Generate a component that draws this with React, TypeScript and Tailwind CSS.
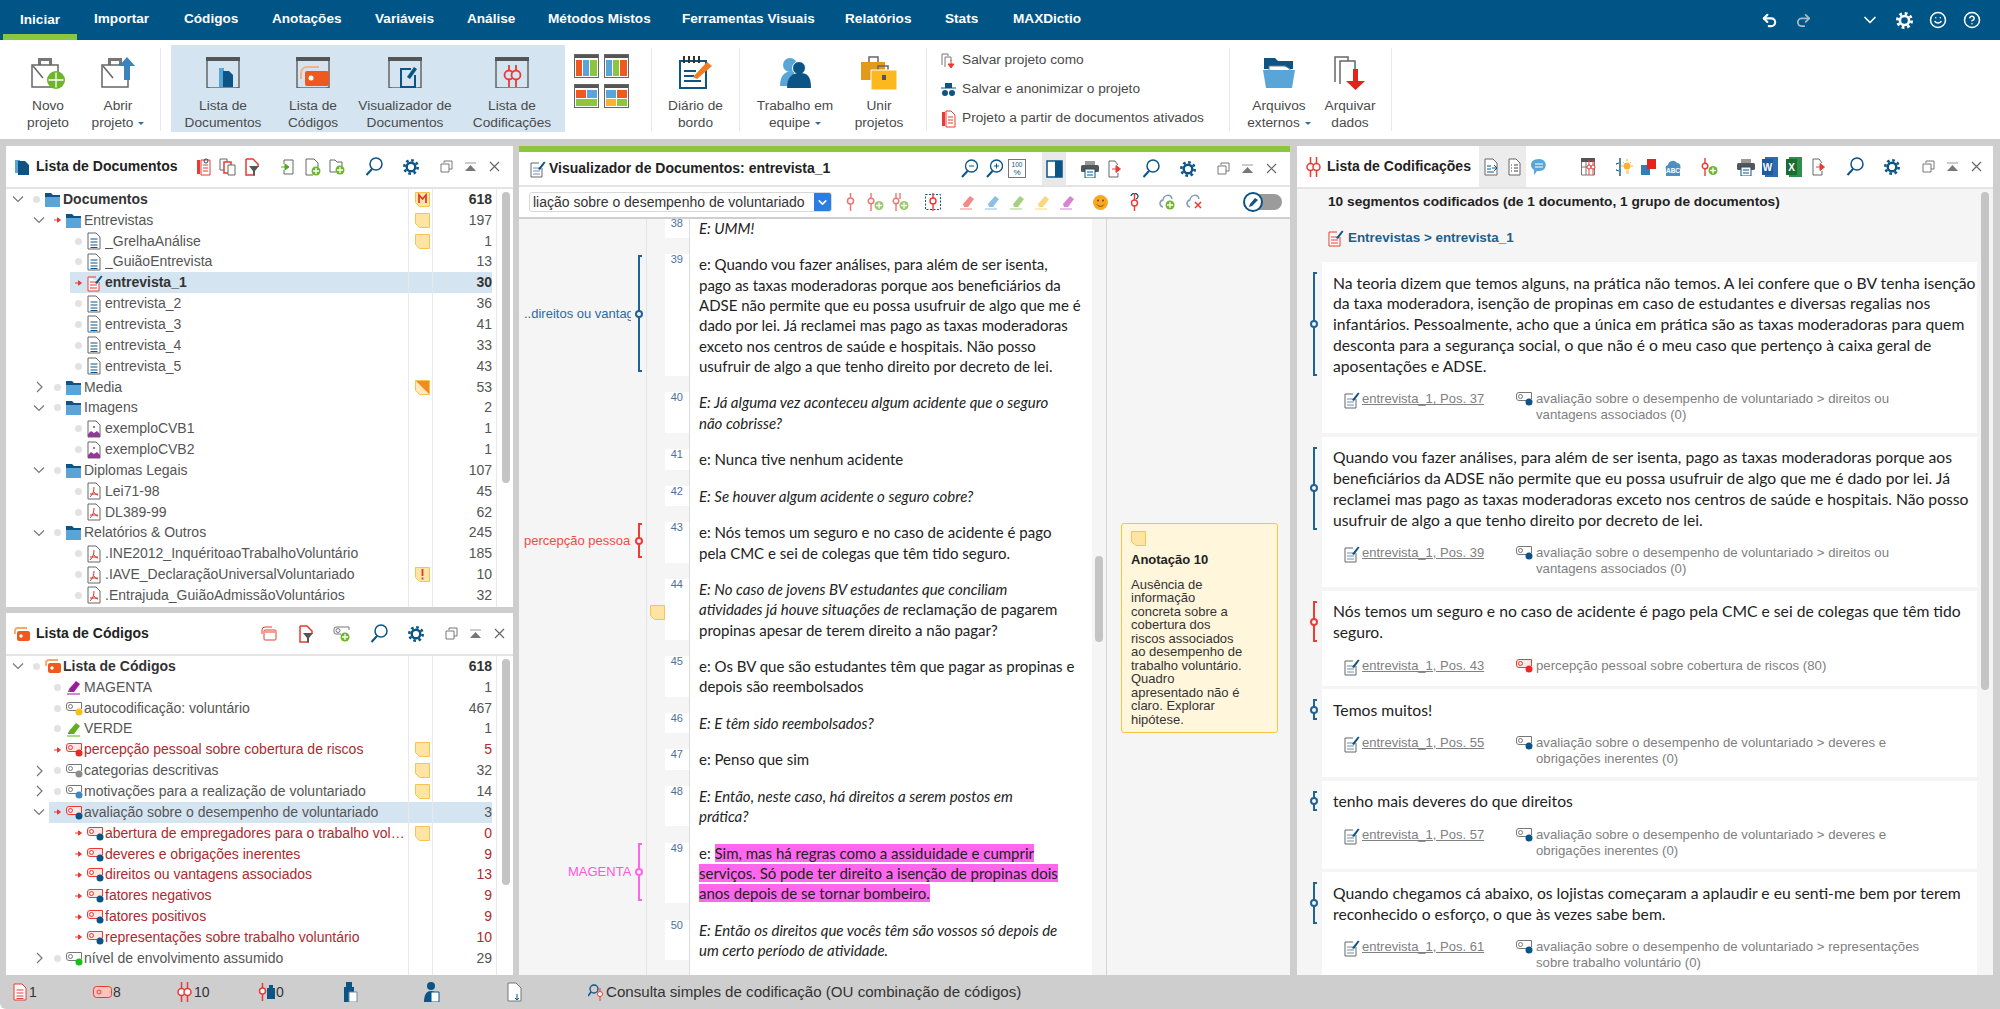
import type { ReactNode } from "react";
import { ChevronDown, CircleHelp, Redo2, Smile, Undo2 } from "lucide-react";

const BLUE = "#0b5485";
const SKY = "#5aa5d8";
const RED = "#ea3a33";

const S = ({ w, h, vb, children }: { w: number; h: number; vb?: string; children: ReactNode }) => (
  <svg width={w} height={h} viewBox={vb ?? `0 0 ${w} ${h}`} fill="none" className="shrink-0">
    {children}
  </svg>
);

const At = ({ c, children }: { c: string; children: ReactNode }) => (
  <span className={`flex shrink-0 items-center ${c}`}>{children}</span>
);

// small toolbar icons
const Search = () => (
  <S w={18} h={19}>
    <circle cx="11" cy="7" r="6" stroke={BLUE} strokeWidth="1.5" />
    <path d="M7 12 1.5 18" stroke={BLUE} strokeWidth="2" />
  </S>
);
const Gear = ({ c = BLUE, size = 16 }: { c?: string; size?: number }) => (
  <S w={size} h={size} vb="0 0 16 16">
    <circle cx="8" cy="8" r="4.300" stroke={c} strokeWidth="2.400" />
    <circle cx="8" cy="8" r="6.700" stroke={c} strokeWidth="2.600" strokeDasharray="2.630 2.630" />
  </S>
);
const Restore = () => (
  <S w={13} h={13}>
    <path d="M4 3V1h8v8h-3M1 4h8v8H1z" stroke="#777" />
  </S>
);
const Eject = () => (
  <S w={11} h={10}>
    <path d="M0 1h11" stroke="#999" />
    <path d="M5.5 3 11 9H0z" fill="#777" />
  </S>
);
const Close = () => (
  <S w={11} h={11}>
    <path d="M1 1l9 9M10 1l-9 9" stroke="#666" strokeWidth="1.2" />
  </S>
);
const WinControls = ({ c }: { c: string }) => (
  <>
    <At c={c}><Restore /></At>
    <At c="ml-[12px]"><Eject /></At>
    <At c="ml-[13px]"><Close /></At>
  </>
);
const Plus = ({ x, y, r = 4.5 }: { x: number; y: number; r?: number }) => (
  <>
    <circle cx={x} cy={y} r={r} fill="#6db52c" />
    <path d={`M${x - r + 1.5} ${y}h${2 * r - 3}M${x} ${y - r + 1.5}v${2 * r - 3}`} stroke="#fff" strokeWidth="1.3" />
  </>
);
const Doc = ({ line = BLUE, edge = "#666" }: { line?: string; edge?: string }) => (
  <S w={14} h={18}>
    <path d="M1 1h8l4 4v12H1z" fill="#fff" stroke={edge} />
    <path d="M3.5 7h7M3.5 10h7M3.5 13h7M3.5 15.5h7" stroke={line} />
  </S>
);
const DocPen = ({ red = false }: { red?: boolean }) => (
  <S w={16} h={18}>
    <path d="M1 3h8M1 3v14h11V8" stroke={red ? RED : "#666"} fill="#fff" />
    <path d="M3 8h7M3 11h7M3 14h7" stroke={red ? RED : "#6c8fb0"} />
    <path d="M8 9 14 1.5l1.5 1L10 10z" fill={BLUE} />
  </S>
);
const Pdf = () => (
  <S w={14} h={18}>
    <path d="M1 1h8l4 4v12H1z" fill="#fff" stroke="#666" />
    <path d="M7 5c0 4-1 7-4 10M7 10c1 2 2.500 3 4 3M3 12h8" stroke="#d8302a" />
  </S>
);
const Img = () => (
  <S w={14} h={18}>
    <path d="M1 1h8l4 4v12H1z" fill="#fff" stroke="#666" />
    <path d="M1 17v-3l3-3 3 2 3-2 3 3v3z" fill="#8e3a96" />
    <circle cx="7" cy="7" r="1" fill="#8e3a96" />
  </S>
);
const Folder = () => (
  <S w={15} h={15}>
    <path d="M0 2h6l2 2h7v11H0z" fill={SKY} />
    <path d="M0 1h6l2 2h7v2H0z" fill={BLUE} />
  </S>
);
const Memo = ({ k }: { k?: "M" | "!" | "media" }) => (
  <S w={15} h={15}>
    <path d="M.5.500h14v14h-10l-4-4z" fill={k === "media" ? "#ffe9bd" : "#ffe4a3"} stroke="#f8c354" />
    {k === "media" && <path d="M1 1h13v13z" fill="#f58a1f" />}
    {k === "M" && <path d="M4 11V3l3.500 4L11 3v8" stroke="#e0352b" strokeWidth="1.7" />}
    {k === "!" && <path d="M7.500 2v7M7.500 10.500v2" stroke="#e0352b" strokeWidth="1.8" />}
  </S>
);
const Tag = ({ dot, red = false }: { dot: string; red?: boolean }) => (
  <S w={17} h={15}>
    <path d="M15.500 8V1.500H3A2.500 2.500 0 0 0 .5 4v3A2.500 2.500 0 0 0 3 9.500h7" stroke={red ? RED : "#777"} fill={red ? "#fde8e6" : "#fff"} />
    <circle cx="4.500" cy="5.500" r="2" stroke={red ? RED : "#777"} />
    <circle cx="13" cy="11" r="3.500" fill={dot} />
  </S>
);
const CodesIcon = () => (
  <S w={16} h={14}>
    <path d="M1 7V4a3 3 0 0 1 3-3h9" stroke="#f8a66c" strokeWidth="1.800" />
    <rect x="3" y="4" width="13" height="10" rx="2" fill="#f0591e" />
    <circle cx="7" cy="9" r="1.700" fill="#fff" />
  </S>
);
const Pen = ({ c }: { c: string }) => (
  <S w={16} h={16}>
    <path d="M3 10 10 2l4 3-6 8H4z" fill={c} />
    <path d="M3 10l-1 3h2" fill="#555" />
    <path d="M1 15h13" stroke={c} />
  </S>
);
const Seg = ({ c = RED }: { c?: string }) => (
  <S w={9} h={18}>
    <path d="M4.500 0v18" stroke={c} strokeWidth="1.500" />
    <circle cx="4.500" cy="8" r="3" fill="#fff" stroke={c} strokeWidth="1.500" />
  </S>
);
const Seg2 = ({ size = 1 }: { size?: number }) => (
  <S w={15 * size} h={20 * size} vb="0 0 15 20">
    <path d="M4.500 0v20M10.500 0v20" stroke={RED} strokeWidth="1.500" />
    <circle cx="4.500" cy="10" r="3.500" fill="#fff" stroke={RED} strokeWidth="1.500" />
    <circle cx="10.500" cy="10" r="3.500" fill="#fff" stroke={RED} strokeWidth="1.500" />
  </S>
);
const SegPlus = ({ two = false, faded = false }: { two?: boolean; faded?: boolean }) => (
  <S w={17} h={18}>
    <g opacity={faded ? 0.7 : 1}>
      <path d="M4 0v18" stroke={RED} strokeWidth="1.400" />
      <circle cx="4" cy="8" r="2.800" fill="#fff" stroke={RED} strokeWidth="1.400" />
      {two && <path d="M8 0v6" stroke={RED} strokeWidth="1.400" />}
      <Plus x={12} y={12.500} />
    </g>
  </S>
);
const Printer = () => (
  <S w={18} h={18}>
    <path d="M4 5V1h10v4z" fill="#999" />
    <rect x="0" y="5" width="18" height="7" rx="1.500" fill="#555" />
    <rect x="4" y="9" width="10" height="9" fill="#fff" stroke={BLUE} />
    <path d="M6 12h6M6 15h6" stroke={BLUE} />
  </S>
);
const Export = () => (
  <S w={14} h={18}>
    <path d="M10 5 7 1H1v16h9v-4" stroke="#666" />
    <path d="M4 9h6M8 5.500 12.500 9 8 12.500z" fill={RED} stroke={RED} />
  </S>
);
const HlPen = ({ c }: { c: string }) => (
  <S w={15} h={16}>
    <path d="M3 10 10 2l4 3-6 8H4z" fill={c} opacity="0.7" />
    <path d="M0 15h12" stroke={c} opacity="0.7" />
  </S>
);
const Cloud = ({ x = false }: { x?: boolean }) => (
  <S w={17} h={18}>
    <path d="M4 14c-4-1-4-6 0-7 1-6 8-6 9-1" stroke="#7d9db8" strokeWidth="1.500" />
    {x ? <path d="M9 9l6 6M15 9l-6 6" stroke={RED} strokeWidth="1.500" /> : <Plus x={11} y={12} />}
  </S>
);

// ribbon icons
const Case = ({ children }: { children: ReactNode }) => (
  <S w={36} h={34}>
    <path d="M8 9V2h14v7" fill="#777" />
    <path d="M11 9V5h8v4" fill="#fff" />
    <path d="M2 9h26v22H2z" fill="#fff" stroke="#666" strokeWidth="1.500" />
    <path d="M3 10l10 12" stroke="#666" strokeWidth="1.500" />
    {children}
  </S>
);
const Frame = ({ children }: { children: ReactNode }) => (
  <S w={34} h={31}>
    <path d="M1 31h3M30 31h3M1 2v29M33 2v29" stroke="#666" strokeWidth="1.500" />
    <path d="M1 31h32" stroke="#666" strokeWidth="1.500" />
    <path d="M0 0h34v4H0z" fill="#555" />
    {children}
  </S>
);
const Grid = ({ cells }: { cells: string[] }) => (
  <S w={25} h={24}>
    <path d="M0 0h25v4H0z" fill="#555" />
    <rect x=".5" y=".5" width="24" height="23" stroke="#666" />
    {cells.map((d, i) => (
      <path key={i} d={d.split("|")[0]} fill={d.split("|")[1]} />
    ))}
  </S>
);
const Caret = () => (
  <span className="ml-[5px] inline-block h-0 w-0 border-x-[3px] border-t-[3px] border-x-transparent border-t-[#2f6f9f] align-middle" />
);

const RibbonBtn = ({ w, icon, a, b, caret }: { w: string; icon: ReactNode; a: string; b: string; caret?: boolean }) => (
  <div className={`flex h-[99px] shrink-0 flex-col items-center ${w}`}>
    <div className="flex h-[33px] mt-[16px] items-center justify-center">{icon}</div>
    <div className="mt-[8px] whitespace-nowrap text-center text-[13.7px] leading-[17px] text-[#4a4a4a]">
      <div>{a}</div>
      <div>{b}{caret && <Caret />}</div>
    </div>
  </div>
);
const Sep = ({ c }: { c: string }) => <div className={`mt-[8px] h-[83px] w-px shrink-0 bg-[#e8e8e8] ${c}`} />;

const Ribbon = () => (
  <div className="flex h-[99px] shrink-0 bg-white pl-[13px]">
    <RibbonBtn w="w-[70px]" a="Novo" b="projeto" icon={<Case><Plus x={26} y={24} r={9} /></Case>} />
    <RibbonBtn w="w-[70px]" a="Abrir" b="projeto" caret icon={<Case><path d="M27 1l8 9h-5v14h-6V10h-5z" fill="#3a83bb" /></Case>} />
    <Sep c="ml-[7px]" />
    <div className="ml-[10px] mt-[5px] flex h-[87px] w-[394px] shrink-0 bg-[#d5e4f1] -mb-[5px]">
      <div className="-mt-[5px] flex">
        <RibbonBtn w="w-[104px]" a="Lista de" b="Documentos" icon={<Frame><path d="M13 11h5v19h-5z" fill={SKY} /><path d="M17 14h6l4 4v12H17z" fill={BLUE} /></Frame>} />
        <RibbonBtn w="w-[76px]" a="Lista de" b="Códigos" icon={<Frame><path d="M5 22v-6a6 6 0 0 1 6-6h12" stroke="#f8b183" strokeWidth="2" /><rect x="9" y="14" width="24" height="15" rx="2" fill="#f0591e" /><circle cx="15" cy="21" r="2.500" fill="#fff" /></Frame>} />
        <RibbonBtn w="w-[108px]" a="Visualizador de" b="Documentos" icon={<Frame><path d="M23 12H13v18h14V18" stroke={BLUE} strokeWidth="2" /><path d="M19 20l7-10 3 2-7 10z" fill={BLUE} /></Frame>} />
        <RibbonBtn w="w-[106px]" a="Lista de" b="Codificações" icon={<Frame><path d="M14 8v22M21 8v22" stroke={RED} strokeWidth="1.800" /><circle cx="14" cy="18" r="4.500" fill="#d5e4f1" stroke={RED} strokeWidth="1.800" /><circle cx="21" cy="18" r="4.500" fill="#d5e4f1" stroke={RED} strokeWidth="1.800" /></Frame>} />
      </div>
    </div>
    <div className="ml-[9px] mt-[14px] grid h-[54px] grid-cols-[25px_25px] gap-x-[5px] gap-y-[6px]">
      <Grid cells={["M2 6h6v16H2z|#f0591e", "M9 6h6v16H9z|#5aa5d8", "M16 6h7v16h-7z|#8cc63f"]} />
      <Grid cells={["M2 6h6v16H2z|#5aa5d8", "M9 6h6v16H9z|#8cc63f", "M16 6h7v16h-7z|#f0591e"]} />
      <Grid cells={["M2 6h10v8H2z|#f0591e", "M13 6h10v8H13z|#5aa5d8", "M2 15h21v7H2z|#8cc63f"]} />
      <Grid cells={["M2 6h10v8H2z|#5aa5d8", "M13 6h10v8H13z|#f0591e", "M2 15h10v7H2z|#f9b233", "M13 15h10v7H13z|#8cc63f"]} />
    </div>
    <Sep c="ml-[22px]" />
    <RibbonBtn w="w-[87px]" a="Diário de" b="bordo" icon={
      <S w={34} h={33}>
        <path d="M1 5h26v27H1z" fill="#fff" stroke={BLUE} strokeWidth="2" />
        <path d="M5 0v7M10 0v7M15 0v7M20 0v7" stroke="#333" strokeWidth="2" />
        <path d="M5 15h12M5 20h10M5 25h17" stroke={BLUE} strokeWidth="2" />
        <path d="M14 21 28 6l5 4-15 13z" fill="#f47b20" />
      </S>} />
    <Sep c="" />
    <RibbonBtn w="w-[110px]" a="Trabalho em" b="equipe" caret icon={
      <S w={32} h={33}>
        <circle cx="11" cy="9" r="7" fill={SKY} />
        <path d="M1 30c0-12 6-15 14-15v15z" fill={SKY} />
        <circle cx="20" cy="12" r="6.500" fill={BLUE} stroke="#fff" />
        <path d="M8 32c0-11 5-15 13-15s11 4 11 15z" fill={BLUE} />
      </S>} />
    <RibbonBtn w="w-[58px]" a="Unir" b="projetos" icon={
      <S w={36} h={34}>
        <path d="M8 6V1h9v5" stroke="#666" strokeWidth="1.500" />
        <path d="M0 6h24v18H0z" fill="#e39a1a" />
        <path d="M17 14v-4h10v4" stroke="#666" strokeWidth="1.500" />
        <path d="M10 14h26v20H10z" fill="#fbb81f" stroke="#fff" />
        <path d="M21 19h4v5h-4z" fill="#555" />
      </S>} />
    <Sep c="ml-[18px]" />
    <div className="ml-[14px] mt-[6px] flex w-[286px] shrink-0 flex-col text-[13.7px] text-[#4a4a4a]">
      <div className="flex h-[29px] items-center">
        <div className="w-[21px]"><S w={14} h={16}><path d="M1 12V1h6l0 2M4 14V4h6v4" stroke="#777" /><path d="M10 7v5M7 11l3 4 3-4z" fill={RED} stroke={RED} /></S></div>
        Salvar projeto como
      </div>
      <div className="flex h-[29px] items-center">
        <div className="w-[21px]"><S w={15} h={15}><path d="M4 6V1h7v5h4H0z" fill={BLUE} /><path d="M0 6h15" stroke={BLUE} /><circle cx="4" cy="11" r="3" fill={BLUE} /><circle cx="11" cy="11" r="3" fill={BLUE} /></S></div>
        Salvar e anonimizar o projeto
      </div>
      <div className="flex h-[29px] items-center">
        <div className="w-[21px]"><S w={15} h={18}><path d="M1 2h3v14H1z" fill={RED} /><path d="M5 1h5l4 4v12H5z" fill="#fff" stroke={RED} /><path d="M7 7h5M7 10h5M7 13h5" stroke={RED} /></S></div>
        Projeto a partir de documentos ativados
      </div>
    </div>
    <Sep c="ml-[2px]" />
    <div className="flex pl-[9px]">
      <RibbonBtn w="w-[80px]" a="Arquivos" b="externos" caret icon={
        <S w={32} h={32}>
          <path d="M1 1h11l3 3h15v8H1z" fill={BLUE} />
          <path d="M6 9h16l5 3v8H6z" fill="#fff" stroke="#777" />
          <path d="M0 13h32l-3 18H3z" fill={SKY} />
        </S>} />
      <RibbonBtn w="w-[62px]" a="Arquivar" b="dados" icon={
        <S w={32} h={34}>
          <path d="M1 26V1h13v4M6 28V5h15v8" stroke="#666" strokeWidth="1.500" fill="#fff" />
          <path d="M19 13h5v12h7L21.500 34 12 25h7z" fill="#e3241c" />
        </S>} />
    </div>
    <Sep c="ml-[10px]" />
  </div>
);

// tree panels
type Row = {
  l: number;
  open?: boolean;
  mark?: boolean;
  icon: ReactNode;
  t: string;
  memo?: ReactNode;
  n: number;
  bold?: boolean;
  sel?: boolean;
  red?: boolean;
};

const levelPad = ["pl-[6px]", "pl-[27px]", "pl-[48px]"];
const textWidth = ["w-[345px]", "w-[324px]", "w-[303px]"];

const Chevron = ({ open }: { open: boolean }) => (
  <S w={12} h={12}>
    <path d={open ? "M1 3.500l5 5 5-5" : "M4 1l5 5-5 5"} stroke="#777" strokeWidth="1.200" />
  </S>
);

const TreeRow = ({ r }: { r: Row }) => (
  <div className="flex h-[20.85px] shrink-0 items-center">
    <div className={`flex h-full shrink-0 items-center ${levelPad[r.l]}`}>
      <div className="flex w-[16px] items-center">{r.open !== undefined && <Chevron open={r.open} />}</div>
    </div>
    <div className={`flex h-full items-center ${r.sel ? "bg-[#d5e4f1]" : ""}`}>
      <div className="flex w-[17px] shrink-0 items-center pl-[5px]">
        {r.mark ? (
          <S w={7} h={6}><path d="M0 3h4M3.500.8 6.500 3l-3 2.200z" fill={RED} stroke={RED} /></S>
        ) : (
          <span className="h-[7px] w-[7px] rounded-full bg-[#e2e2e2]" />
        )}
      </div>
      <div className="flex w-[18px] shrink-0 items-center">{r.icon}</div>
      <div className={`truncate ${textWidth[r.l]} ${r.bold ? "font-bold text-[#333]" : r.red ? "text-[#ad2a2e]" : "text-[#555]"}`}>{r.t}</div>
      <div className="flex h-full w-[25px] shrink-0 items-center border-x border-[#e8e8e8] pl-[6px]">{r.memo}</div>
      <div className={`w-[59px] shrink-0 text-right ${r.bold ? "font-bold text-[#333]" : r.red ? "text-[#ad2a2e]" : "text-[#555]"}`}>{r.n}</div>
    </div>
  </div>
);

const Tree = ({ rows, thumb }: { rows: Row[]; thumb: string }) => (
  <div className="flex min-h-0 flex-1 overflow-hidden">
    <div className="flex w-[490px] shrink-0 flex-col text-[14px]">
      {rows.map((r) => (
        <TreeRow key={r.t + r.l} r={r} />
      ))}
      <div className="flex flex-1">
        <div className="ml-[402px] w-[25px] border-x border-[#e8e8e8]" />
      </div>
    </div>
    <div className="flex-1 border-l border-[#e8e8e8] pl-[5px] pt-[3px]">
      <div className={`w-[8px] rounded-full bg-[#c4c4c4] ${thumb}`} />
    </div>
  </div>
);

const docRows: Row[] = [
  { l: 0, open: true, icon: <Folder />, t: "Documentos", memo: <Memo k="M" />, n: 618, bold: true },
  { l: 1, open: true, mark: true, icon: <Folder />, t: "Entrevistas", memo: <Memo />, n: 197 },
  { l: 2, icon: <Doc />, t: "_GrelhaAnálise", memo: <Memo />, n: 1 },
  { l: 2, icon: <Doc />, t: "_GuiãoEntrevista", n: 13 },
  { l: 2, mark: true, icon: <DocPen red />, t: "entrevista_1", n: 30, bold: true, sel: true },
  { l: 2, icon: <Doc />, t: "entrevista_2", n: 36 },
  { l: 2, icon: <Doc />, t: "entrevista_3", n: 41 },
  { l: 2, icon: <Doc />, t: "entrevista_4", n: 33 },
  { l: 2, icon: <Doc />, t: "entrevista_5", n: 43 },
  { l: 1, open: false, icon: <Folder />, t: "Media", memo: <Memo k="media" />, n: 53 },
  { l: 1, open: true, icon: <Folder />, t: "Imagens", n: 2 },
  { l: 2, icon: <Img />, t: "exemploCVB1", n: 1 },
  { l: 2, icon: <Img />, t: "exemploCVB2", n: 1 },
  { l: 1, open: true, icon: <Folder />, t: "Diplomas Legais", n: 107 },
  { l: 2, icon: <Pdf />, t: "Lei71-98", n: 45 },
  { l: 2, icon: <Pdf />, t: "DL389-99", n: 62 },
  { l: 1, open: true, icon: <Folder />, t: "Relatórios & Outros", n: 245 },
  { l: 2, icon: <Pdf />, t: ".INE2012_InquéritoaoTrabalhoVoluntário", n: 185 },
  { l: 2, icon: <Pdf />, t: ".IAVE_DeclaraçãoUniversalVoluntariado", memo: <Memo k="!" />, n: 10 },
  { l: 2, icon: <Pdf />, t: ".Entrajuda_GuiãoAdmissãoVoluntários", n: 32 },
];

const codeRows: Row[] = [
  { l: 0, open: true, icon: <CodesIcon />, t: "Lista de Códigos", n: 618, bold: true },
  { l: 1, icon: <Pen c="#a3189b" />, t: "MAGENTA", n: 1 },
  { l: 1, icon: <Tag dot="#fbbf16" />, t: "autocodificação: voluntário", n: 467 },
  { l: 1, icon: <Pen c="#62ad22" />, t: "VERDE", n: 1 },
  { l: 1, mark: true, icon: <Tag red dot="#ea2a22" />, t: "percepção pessoal sobre cobertura de riscos", memo: <Memo />, n: 5, red: true },
  { l: 1, open: false, icon: <Tag dot="#8e8e8e" />, t: "categorias descritivas", memo: <Memo />, n: 32 },
  { l: 1, open: false, icon: <Tag dot="#3f87c4" />, t: "motivações para a realização de voluntariado", memo: <Memo />, n: 14 },
  { l: 1, open: true, mark: true, icon: <Tag red dot={BLUE} />, t: "avaliação sobre o desempenho de voluntariado", n: 3, sel: true },
  { l: 2, mark: true, icon: <Tag red dot={BLUE} />, t: "abertura de empregadores para o trabalho voluntário", memo: <Memo />, n: 0, red: true },
  { l: 2, mark: true, icon: <Tag red dot={BLUE} />, t: "deveres e obrigações inerentes", n: 9, red: true },
  { l: 2, mark: true, icon: <Tag red dot={BLUE} />, t: "direitos ou vantagens associados", n: 13, red: true },
  { l: 2, mark: true, icon: <Tag red dot={BLUE} />, t: "fatores negativos", n: 9, red: true },
  { l: 2, mark: true, icon: <Tag red dot={BLUE} />, t: "fatores positivos", n: 9, red: true },
  { l: 2, mark: true, icon: <Tag red dot={BLUE} />, t: "representações sobre trabalho voluntário", n: 10, red: true },
  { l: 1, open: false, icon: <Tag dot="#15c21a" />, t: "nível de envolvimento assumido", n: 29 },
];

const Title = ({ c, children }: { c: string; children: ReactNode }) => (
  <div className={`shrink-0 whitespace-nowrap text-[14px] font-bold text-[#222] ${c}`}>{children}</div>
);

const DocPanel = () => (
  <div className="flex h-[461px] shrink-0 flex-col bg-white">
    <div className="flex h-[43px] shrink-0 items-center border-b-2 border-[#e4e4e4]">
      <At c="ml-[9px]"><S w={15} h={16}><path d="M0 1h5v13H0z" fill={SKY} /><path d="M3 2h7l4 4v10H3z" fill={BLUE} /></S></At>
      <Title c="ml-[6px] w-[140px]">Lista de Documentos</Title>
      <At c="ml-[20px]"><S w={15} h={18}><path d="M1 2h3v14H1z" fill={RED} /><path d="M5 2h9v15H5z" fill="#fff" stroke={RED} /><path d="M7 7h5M7 10h5M7 13h5" stroke={RED} /><circle cx="10" cy="3" r="2" stroke={BLUE} /></S></At>
      <At c="ml-[8px]"><S w={17} h={18}><path d="M1 1h7v11H1z" stroke="#666" /><path d="M5 4h7v11H5z" fill="#fff" stroke={RED} strokeWidth="1.500" /><path d="M9 7h7v10H9z" fill="#fff" stroke="#666" /></S></At>
      <At c="ml-[9px]"><S w={14} h={18}><path d="M1 1h7l5 5v3M1 1v16h8" stroke={RED} strokeWidth="1.500" /><path d="M4 8h10l-4 5v5l-2-1v-4z" fill="#555" /></S></At>
      <At c="ml-[22px]"><S w={13} h={16}><path d="M3 1h9v14H3M3 5V1M3 15v-4" stroke="#666" /><path d="M0 8h6M4 5l4 3-4 3z" fill="#4fa81c" stroke="#4fa81c" /></S></At>
      <At c="ml-[11px]"><S w={16} h={18}><path d="M9 1H1v16h7M9 1l4 4v4" stroke="#666" /><Plus x={11} y={13} /></S></At>
      <At c="ml-[8px]"><S w={16} h={16}><path d="M7 13H1V1h5l2 2h5v4" stroke="#666" /><Plus x={11} y={11} /></S></At>
      <At c="ml-[20px]"><Search /></At>
      <At c="ml-[20px]"><Gear /></At>
      <WinControls c="ml-[21px]" />
    </div>
    <Tree rows={docRows} thumb="h-[291px]" />
  </div>
);

const CodePanel = () => (
  <div className="flex min-h-0 flex-1 flex-col bg-white">
    <div className="flex h-[43px] shrink-0 items-center border-b-2 border-[#e4e4e4]">
      <At c="ml-[8px]"><CodesIcon /></At>
      <Title c="ml-[6px] w-[225px]">Lista de Códigos</Title>
      <At c="ml-[0px]"><S w={16} h={15}><path d="M1 8V4a3 3 0 0 1 3-3h7" stroke={RED} /><rect x="3" y="4" width="12" height="10" rx="1" fill="#fff" stroke={RED} /><path d="M3 5h12v2H3z" fill="#f59d97" /></S></At>
      <At c="ml-[22px]"><S w={14} h={18}><path d="M1 1h7l5 5v3M1 1v16h8" stroke={RED} strokeWidth="1.500" /><path d="M4 8h10l-4 5v5l-2-1v-4z" fill="#555" /></S></At>
      <At c="ml-[20px]"><S w={17} h={16}><path d="M16 4V1H3a2 2 0 0 0-2 2v3a2 2 0 0 0 2 2h5" stroke="#777" /><circle cx="5" cy="4.500" r="2" stroke="#777" /><Plus x={12} y={11} /></S></At>
      <At c="ml-[20px]"><Search /></At>
      <At c="ml-[20px]"><Gear /></At>
      <WinControls c="ml-[21px]" />
    </div>
    <Tree rows={codeRows} thumb="h-[226px]" />
  </div>
);

// document browser
type Para = { n: number; lines: ReactNode[] };
const I = ({ children }: { children: ReactNode }) => <span className="italic">{children}</span>;
const Mark = ({ children }: { children: ReactNode }) => <span className="bg-[#ff66ee]">{children}</span>;

const paras: Para[] = [
  { n: 38, lines: [<I>E: UMM!</I>] },
  { n: 39, lines: ["e: Quando vou fazer análises, para além de ser isenta,", "pago as taxas moderadoras porque aos beneficiários da", "ADSE não permite que eu possa usufruir de algo que me é", "dado por lei. Já reclamei mas pago as taxas moderadoras", "exceto nos centros de saúde e hospitais. Não posso", "usufruir de algo a que tenho direito por decreto de lei."] },
  { n: 40, lines: [<I>E: Já alguma vez aconteceu algum acidente que o seguro</I>, <I>não cobrisse?</I>] },
  { n: 41, lines: ["e: Nunca tive nenhum acidente"] },
  { n: 42, lines: [<I>E: Se houver algum acidente o seguro cobre?</I>] },
  { n: 43, lines: ["e: Nós temos um seguro e no caso de acidente é pago", "pela CMC e sei de colegas que têm tido seguro."] },
  { n: 44, lines: [<I>E: No caso de jovens BV estudantes que conciliam</I>, <><I>atividades já houve situações de</I> reclamação de pagarem</>, "propinas apesar de terem direito a não pagar?"] },
  { n: 45, lines: ["e: Os BV que são estudantes têm que pagar as propinas e", "depois são reembolsados"] },
  { n: 46, lines: [<I>E: E têm sido reembolsados?</I>] },
  { n: 47, lines: ["e: Penso que sim"] },
  { n: 48, lines: [<I>E: Então, neste caso, há direitos a serem postos em</I>, <I>prática?</I>] },
  { n: 49, lines: [<>e: <Mark>Sim, mas há regras como a assiduidade e cumprir</Mark></>, <Mark>serviços. Só pode ter direito a isenção de propinas dois</Mark>, <Mark>anos depois de se tornar bombeiro.</Mark>] },
  { n: 50, lines: [<I>E: Então os direitos que vocês têm são vossos só depois de</I>, <I>um certo período de atividade.</I>] },
];

const CodeMark = ({ top, h, color, label, labelColor }: { top: string; h: string; color: string; label: string; labelColor: string }) => (
  <div className={`absolute left-[5px] flex w-[123px] items-center ${top} ${h}`}>
    <div className={`w-[107px] overflow-hidden whitespace-nowrap text-[13px] ${labelColor}`}>{label}</div>
    <div className="relative h-full w-[12px]">
      <div className={`absolute bottom-0 left-[7px] top-0 w-[4px] border-y-2 border-l-2 ${color}`} />
      <div className={`absolute left-[4px] top-1/2 h-[8px] w-[8px] -translate-y-1/2 rounded-full border-2 bg-[#f5f5f5] ${color}`} />
    </div>
  </div>
);

const Viewer = () => (
  <div className="flex w-[771px] shrink-0 flex-col border-t-[6px] border-[#8cc63f] bg-white">
    <div className="flex h-[35px] shrink-0 items-center border-b-2 border-[#e4e4e4]">
      <At c="ml-[11px]"><DocPen /></At>
      <Title c="ml-[3px] w-[280px]">Visualizador de Documentos: entrevista_1</Title>
      <At c="ml-[132px]"><S w={17} h={19}><circle cx="10.500" cy="7" r="6" stroke={BLUE} strokeWidth="1.300" /><path d="M6.500 12 1 18" stroke={BLUE} strokeWidth="2" /><path d="M8 7h5" stroke={BLUE} /></S></At>
      <At c="ml-[8px]"><S w={17} h={19}><circle cx="10.500" cy="7" r="6" stroke={BLUE} strokeWidth="1.300" /><path d="M6.500 12 1 18" stroke={BLUE} strokeWidth="2" /><path d="M8 7h5M10.500 4.500v5" stroke={BLUE} /></S></At>
      <At c="ml-[5px]"><S w={18} h={19}><rect x=".5" y=".5" width="17" height="18" stroke="#777" /><text x="9" y="8" fontSize="6.500" fill={BLUE} textAnchor="middle">100</text><text x="9" y="16" fontSize="8" fill={BLUE} textAnchor="middle">%</text></S></At>
      <div className="ml-[16px] flex h-[33px] w-[24px] shrink-0 items-center justify-center bg-[#e9e9e9]">
        <S w={17} h={18}><rect x="1" y="1" width="15" height="16" stroke={BLUE} strokeWidth="1.500" fill="#fff" /><path d="M9 1h7v16H9z" fill={BLUE} /></S>
      </div>
      <At c="ml-[15px]"><Printer /></At>
      <At c="ml-[9px]"><Export /></At>
      <At c="ml-[20px]"><Search /></At>
      <At c="ml-[20px]"><Gear /></At>
      <WinControls c="ml-[21px]" />
    </div>
    <div className="flex h-[32px] shrink-0 items-center border-b-2 border-[#cfcfcf]">
      <div className="ml-[10px] flex h-[20px] w-[303px] shrink-0 items-center overflow-hidden rounded-[3px] border border-[#d8d8d8]">
        <div className="w-[284px] overflow-hidden whitespace-nowrap pl-[3px] text-[14px] text-[#333]">liação sobre o desempenho de voluntariado</div>
        <div className="flex h-full flex-1 items-center justify-center bg-[#2a7de1]"><ChevronDown size={13} color="#fff" strokeWidth={3} /></div>
      </div>
      <At c="ml-[14px] opacity-70"><Seg /></At>
      <At c="ml-[12px]"><SegPlus faded /></At>
      <At c="ml-[8px]"><SegPlus two faded /></At>
      <At c="ml-[16px]"><S w={16} h={18}><rect x=".5" y="1.500" width="15" height="15" stroke={BLUE} strokeDasharray="2 1.500" /><path d="M8 0v18" stroke={RED} strokeWidth="1.400" /><circle cx="8" cy="8" r="3" fill="#fff" stroke={RED} strokeWidth="1.400" /></S></At>
      <At c="ml-[19px]"><HlPen c="#ea5a52" /></At>
      <At c="ml-[10px]"><HlPen c={SKY} /></At>
      <At c="ml-[10px]"><HlPen c="#7fbf4a" /></At>
      <At c="ml-[10px]"><HlPen c="#fbc445" /></At>
      <At c="ml-[10px]"><HlPen c="#c94fc0" /></At>
      <At c="ml-[18px]"><S w={15} h={15}><circle cx="7.500" cy="7.500" r="7.500" fill="#f7a823" /><circle cx="5" cy="5.500" r="1" fill="#7a4a00" /><circle cx="10" cy="5.500" r="1" fill="#7a4a00" /><path d="M4 9.500c2 2.500 5 2.500 7 0" stroke="#7a4a00" /></S></At>
      <At c="ml-[21px]"><S w={11} h={18}><path d="M2 3a3.500 3 0 1 1 5 3" stroke={BLUE} strokeWidth="1.300" /><circle cx="5.500" cy="10" r="3" stroke={RED} strokeWidth="1.400" /><path d="M5.500 7V0M5.500 13v5" stroke={RED} strokeWidth="1.400" /></S></At>
      <At c="ml-[19px]"><Cloud /></At>
      <At c="ml-[10px]"><Cloud x /></At>
      <div className="relative ml-[41px] h-[16px] w-[38px] shrink-0 rounded-full bg-[#9b9b9b]">
        <div className="absolute -left-[1px] -top-[2px] flex h-[20px] w-[20px] items-center justify-center rounded-full border-2 border-[#0b5485] bg-white">
          <S w={11} h={11}><path d="M1 10l1-3 5-6 3 2-6 6z" fill={BLUE} /></S>
        </div>
      </div>
    </div>
    <div className="flex min-h-0 flex-1 overflow-hidden bg-[#f5f5f5]">
      <div className="relative w-[128px] shrink-0 border-r border-[#e4e4e4]">
        <CodeMark top="top-[36px]" h="h-[117px]" color="border-[#1f6295]" label="..direitos ou vantagens" labelColor="text-[#2f6a9b]" />
        <CodeMark top="top-[304px]" h="h-[35px]" color="border-[#ef3b36]" label="percepção pessoal" labelColor="text-[#f04c46]" />
        <CodeMark top="top-[624px]" h="h-[58px]" color="border-[#ff66e6]" label="MAGENTA" labelColor="pl-[44px] text-[#ff55dd]" />
      </div>
      <div className="w-[18px] shrink-0 pl-[3px] pt-[386px]"><Memo /></div>
      <div className="-mt-[1px] flex w-[427px] shrink-0 flex-col">
        {paras.map((p) => (
          <div key={p.n} className="flex shrink-0">
            <div className="flex w-[25px] shrink-0 flex-col border-r border-[#dcdcdc]">
              <div className="flex-1 bg-white pr-[6px] text-right text-[11px] leading-[11px] text-[#4d7099]">{p.n}</div>
              <div className="h-[16.2px]" />
            </div>
            <div className="flex-1 bg-white pb-[16.2px] pl-[9px] [font-family:Lato,sans-serif] text-[15px] leading-[20.3px] text-[#222]">
              {p.lines.map((l, i) => (
                <div key={i} className="whitespace-nowrap">{l}</div>
              ))}
            </div>
          </div>
        ))}
      </div>
      <div className="w-[15px] shrink-0 border-r border-[#d4d4d4] pl-[3px] pt-[337px]">
        <div className="h-[86px] w-[8px] rounded-full bg-[#c4c4c4]" />
      </div>
      <div className="flex-1 pl-[14px] pt-[304px]">
        <div className="h-[210px] w-[157px] rounded-[3px] border border-[#f6c544] bg-[#fff6dc] px-[9px] pt-[7px] text-[13px] leading-[13.5px] text-[#333]">
          <Memo />
          <div className="mt-[7px] font-bold text-[#222]">Anotação 10</div>
          <div className="mt-[11px] whitespace-nowrap">
            <div>Ausência de</div>
            <div>informação</div>
            <div>concreta sobre a</div>
            <div>cobertura dos</div>
            <div>riscos associados</div>
            <div>ao desempenho de</div>
            <div>trabalho voluntário.</div>
            <div>Quadro</div>
            <div>apresentado não é</div>
            <div>claro. Explorar</div>
            <div>hipótese.</div>
          </div>
        </div>
      </div>
    </div>
  </div>
);

// retrieved segments
type Seg = { color: string; lines: string[]; pos: string; dot: string; red?: boolean; code: string[] };

const segs: Seg[] = [
  {
    color: "border-[#1f6295]", dot: BLUE, pos: "entrevista_1, Pos. 37",
    lines: ["Na teoria dizem que temos alguns, na prática não temos. A lei confere que o BV tenha isenção", "da taxa moderadora, isenção de propinas em caso de estudantes e diversas regalias nos", "infantários. Pessoalmente, acho que a única em prática são as taxas moderadoras para quem", "desconta para a segurança social, o que não é o meu caso que pertenço à caixa geral de", "aposentações e ADSE."],
    code: ["avaliação sobre o desempenho de voluntariado > direitos ou", "vantagens associados (0)"],
  },
  {
    color: "border-[#1f6295]", dot: BLUE, pos: "entrevista_1, Pos. 39",
    lines: ["Quando vou fazer análises, para além de ser isenta, pago as taxas moderadoras porque aos", "beneficiários da ADSE não permite que eu possa usufruir de algo que me é dado por lei. Já", "reclamei mas pago as taxas moderadoras exceto nos centros de saúde e hospitais. Não posso", "usufruir de algo a que tenho direito por decreto de lei."],
    code: ["avaliação sobre o desempenho de voluntariado > direitos ou", "vantagens associados (0)"],
  },
  {
    color: "border-[#ef3b36]", dot: "#ea2a22", red: true, pos: "entrevista_1, Pos. 43",
    lines: ["Nós temos um seguro e no caso de acidente é pago pela CMC e sei de colegas que têm tido", "seguro."],
    code: ["percepção pessoal sobre cobertura de riscos (80)"],
  },
  {
    color: "border-[#1f6295]", dot: BLUE, pos: "entrevista_1, Pos. 55",
    lines: ["Temos muitos!"],
    code: ["avaliação sobre o desempenho de voluntariado > deveres e", "obrigações inerentes (0)"],
  },
  {
    color: "border-[#1f6295]", dot: BLUE, pos: "entrevista_1, Pos. 57",
    lines: ["tenho mais deveres do que direitos"],
    code: ["avaliação sobre o desempenho de voluntariado > deveres e", "obrigações inerentes (0)"],
  },
  {
    color: "border-[#1f6295]", dot: BLUE, pos: "entrevista_1, Pos. 61",
    lines: ["Quando chegamos cá abaixo, os lojistas começaram a aplaudir e eu senti-me bem por terem", "reconhecido o esforço, o que às vezes sabe bem."],
    code: ["avaliação sobre o desempenho de voluntariado > representações", "sobre trabalho voluntário (0)"],
  },
];

const SegCard = ({ s }: { s: Seg }) => (
  <div className="flex shrink-0">
    <div className="w-[25px] shrink-0 pl-[16px] pt-[10px]">
      <div className={`relative w-[4px] border-y-2 border-l-2 ${s.color}`} style={{ height: s.lines.length * 20.8 }}>
        <div className={`absolute -left-[5px] top-1/2 h-[8px] w-[8px] -translate-y-1/2 rounded-full border-2 bg-[#f5f5f5] ${s.color}`} />
      </div>
    </div>
    <div className="mb-[3.6px] w-[655px] shrink-0 bg-white pb-[10px] pl-[11px] pt-[10.6px]">
      <div className="[font-family:Lato,sans-serif] text-[15.7px] leading-[20.8px] text-[#222]">
        {s.lines.map((l) => (
          <div key={l} className="whitespace-nowrap">{l}</div>
        ))}
      </div>
      <div className="mt-[14.6px] flex pl-[11px] text-[13.2px] leading-[16px] text-[#808080]">
        <div className="flex w-[172px] shrink-0">
          <div className="w-[18px]"><DocPen /></div>
          <span className="text-[13px] underline">{s.pos}</span>
        </div>
        <div className="w-[20px] shrink-0"><Tag dot={s.dot} red={s.red} /></div>
        <div>
          {s.code.map((c) => (
            <div key={c} className="whitespace-nowrap">{c}</div>
          ))}
        </div>
      </div>
    </div>
  </div>
);

const Retrieved = () => (
  <div className="flex w-[696px] shrink-0 flex-col bg-white">
    <div className="flex h-[43px] shrink-0 items-center border-b-2 border-[#e4e4e4]">
      <At c="ml-[9px]"><Seg2 /></At>
      <Title c="ml-[6px] w-[143px]">Lista de Codificações</Title>
      <div className="ml-[9px] flex h-[41px] w-[47px] shrink-0 items-center bg-[#ececec] pl-[5px]">
        <S w={14} h={18}><path d="M1 1h8l4 4v12H1z" fill="#fff" stroke="#666" /><path d="M3 8h4M3 11h4M3 14h7M8 10h5M10 7l3 3-3 3" stroke={BLUE} /></S>
        <div className="ml-[10px]"><S w={13} h={18}><path d="M1 1h7l4 4v12H1z" fill="#fff" stroke="#666" /><path d="M3 7h1M3 10h1M3 13h1M6 7h4M6 10h4M6 13h4" stroke="#444" /></S></div>
      </div>
      <At c="ml-[5px]"><S w={16} h={18}><path d="M8 1c9 0 9 12 0 12H6l-3 4v-5C-2 9-1 1 8 1z" fill={SKY} /><path d="M4 6h8M4 9h8" stroke="#fff" /></S></At>
      <At c="ml-[34px]"><S w={16} h={18}><path d="M0 0h14v4H0z" fill="#555" /><path d="M.5 4v13h13V4M5 4v13M.5 9h13" stroke="#777" /><path d="M8 2v15M12 2v15" stroke={RED} /><circle cx="8" cy="9" r="2" fill="#fff" stroke={RED} /><circle cx="12" cy="9" r="2" fill="#fff" stroke={RED} /></S></At>
      <At c="ml-[19px]"><S w={17} h={18}><path d="M4 0v18" stroke={BLUE} strokeWidth="1.400" /><path d="M3 5a4 4 0 0 0 0 8" stroke={BLUE} /><circle cx="11" cy="8" r="3.500" fill="#f9b233" /><path d="M11 1v2M5 8h2M15 8h2M7 4l1 1M15 4l-1 1M10 13h3M10 15h3" stroke="#f9b233" /></S></At>
      <At c="ml-[8px]"><S w={15} h={16}><rect x="0" y="6" width="9" height="10" fill="#2f7fb8" /><rect x="6" y="0" width="9" height="10" fill="#e3241c" /></S></At>
      <At c="ml-[9px]"><S w={16} h={18}><path d="M3 7a5 5 0 0 1 9-2c4 0 4 5 3 6v7H1v-7c-1-1 0-4 2-4z" fill="#4d8fc0" /><text x="8" y="15" fontSize="6.500" fontWeight="700" fill="#fff" textAnchor="middle">ABC</text></S></At>
      <At c="ml-[20px]"><SegPlus /></At>
      <At c="ml-[19px]"><Printer /></At>
      <At c="ml-[7px]"><S w={16} h={20}><path d="M3 0h13v20H3z" fill="#2c6cb0" /><path d="M0 2h11v16H0z" fill="#1f5a9a" /><text x="5.500" y="14" fontSize="10" fontWeight="700" fill="#fff" textAnchor="middle">W</text></S></At>
      <At c="ml-[8px]"><S w={16} h={20}><path d="M3 0h13v20H3z" fill="#2f8f4a" /><path d="M0 2h11v16H0z" fill="#1c6b35" /><text x="5.500" y="14" fontSize="10" fontWeight="700" fill="#fff" textAnchor="middle">X</text></S></At>
      <At c="ml-[10px]"><Export /></At>
      <At c="ml-[20px]"><Search /></At>
      <At c="ml-[20px]"><Gear /></At>
      <WinControls c="ml-[22px]" />
    </div>
    <div className="flex min-h-0 flex-1 overflow-hidden bg-[#f5f5f5]">
      <div className="flex min-w-0 w-[680px] shrink-0 flex-col">
        <div className="h-[73px] shrink-0 pl-[31px] pt-[4px]">
          <div className="text-[13.7px] font-bold leading-[18px] text-[#222]">10 segmentos codificados (de 1 documento, 1 grupo de documentos)</div>
          <div className="mt-[17px] flex items-center text-[13.4px] font-bold text-[#1f5f8b]">
            <DocPen red />
            <span className="ml-[4px]">Entrevistas &gt; entrevista_1</span>
          </div>
        </div>
        {segs.map((s) => (
          <SegCard key={s.pos} s={s} />
        ))}
      </div>
      <div className="flex-1 pl-[4px] pt-[3px]">
        <div className="h-[498px] w-[8px] rounded-full bg-[#c4c4c4]" />
      </div>
    </div>
  </div>
);

const StatusBar = () => (
  <div className="flex h-[34px] shrink-0 items-center text-[14px] text-[#333]">
    <At c="ml-[13px]"><Doc line={RED} edge={RED} /></At>
    <span className="ml-[2px] w-[20px] shrink-0">1</span>
    <At c="ml-[44px]"><S w={19} h={12}><rect x=".5" y=".5" width="18" height="11" rx="3" fill="#f9c4bd" stroke={RED} /><circle cx="6" cy="6" r="2" stroke={RED} /></S></At>
    <span className="ml-[1px] w-[64px] shrink-0">8</span>
    <At c=""><Seg2 /></At>
    <span className="ml-[2px] w-[64px] shrink-0">10</span>
    <At c=""><Seg /></At>
    <At c=""><S w={8} h={14}><path d="M2 0h4v3h2v11H0V3h2z" fill={BLUE} /></S></At>
    <span className="ml-[1px] w-[66px] shrink-0">0</span>
    <At c=""><S w={16} h={20}><path d="M4 0h6v5H4zM2 5h10v15H2z" fill={BLUE} /><path d="M7 10h8v10H7z" fill="#fff" stroke="#6d8aa5" /></S></At>
    <At c="ml-[66px]"><S w={16} h={20}><circle cx="7" cy="4" r="4" fill={BLUE} /><path d="M0 20c0-8 3-11 7-11s6 3 6 11z" fill={BLUE} /><path d="M7 10h8v10H7z" fill="#fff" stroke={BLUE} /></S></At>
    <At c="ml-[67px]"><S w={15} h={20}><path d="M1 1h8l5 5v13H1z" fill="#fff" stroke="#777" /><path d="M10 12v6M8 16l2 2 2-2" stroke={BLUE} /></S></At>
    <At c="ml-[66px]"><S w={16} h={18}><circle cx="6" cy="6" r="4" stroke={BLUE} strokeWidth="1.300" /><path d="M3 9l-3 4" stroke={BLUE} strokeWidth="1.500" /><path d="M12 5v13" stroke={RED} /><circle cx="12" cy="11" r="2.500" fill="#fff" stroke={RED} /></S></At>
    <span className="ml-[2px] whitespace-nowrap text-[15.1px]">Consulta simples de codificação (OU combinação de códigos)</span>
  </div>
);

const tabs = [
  { t: "Importar", w: "w-[90px]" },
  { t: "Códigos", w: "w-[88px]" },
  { t: "Anotações", w: "w-[103px]" },
  { t: "Variáveis", w: "w-[92px]" },
  { t: "Análise", w: "w-[81px]" },
  { t: "Métodos Mistos", w: "w-[134px]" },
  { t: "Ferramentas Visuais", w: "w-[163px]" },
  { t: "Relatórios", w: "w-[100px]" },
  { t: "Stats", w: "w-[68px]" },
  { t: "MAXDictio", w: "w-[104px]" },
];

export default function App() {
  return (
    <div className="h-[1009px] w-[2000px] overflow-hidden bg-white [font-family:'Liberation_Sans',Arial,sans-serif]">
      <div className="flex h-full flex-col overflow-hidden rounded-bl-[6px] bg-[#cecece]">
        <div className="flex h-[40px] shrink-0 items-stretch bg-[#005587] pl-[3px] text-[13.6px] font-bold text-white">
          <div className="flex w-[74px] items-center justify-center border-b-[6px] border-[#8cc63f] pt-[6px]">Iniciar</div>
          {tabs.map((tab) => (
            <div key={tab.t} className={`flex items-center whitespace-nowrap pb-[1px] pl-[17px] ${tab.w}`}>{tab.t}</div>
          ))}
          <div className="ml-auto flex items-center pr-[19px]">
            <Undo2 size={17} strokeWidth={3} />
            <Redo2 size={17} strokeWidth={2.500} color="#a9b9c6" className="ml-[17px]" />
            <ChevronDown size={20} strokeWidth={2} className="ml-[48px]" />
            <div className="ml-[16px]"><Gear c="#fff" size={17} /></div>
            <Smile size={18} strokeWidth={2} className="ml-[16px]" />
            <CircleHelp size={18} strokeWidth={2} className="ml-[16px]" />
          </div>
        </div>
        <Ribbon />
        <div className="flex min-h-0 flex-1 gap-x-[6px] pl-[6px] pt-[7px]">
          <div className="flex w-[507px] shrink-0 flex-col gap-y-[6px]">
            <DocPanel />
            <CodePanel />
          </div>
          <Viewer />
          <div className="ml-[1px] flex">
            <Retrieved />
          </div>
        </div>
        <StatusBar />
      </div>
    </div>
  );
}
